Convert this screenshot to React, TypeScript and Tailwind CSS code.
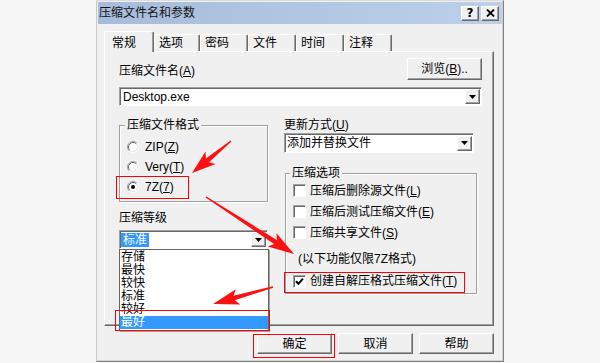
import React from "react";

const raised =
  "bg-[#f0f0f0] border border-t-white border-l-white border-r-[#696969] border-b-[#696969] shadow-[inset_-1px_-1px_0_#a0a0a0]";
const sunken =
  "bg-white border border-t-[#a0a0a0] border-l-[#a0a0a0] border-r-white border-b-white shadow-[inset_1px_1px_0_#696969]";
const etched =
  "border border-[#a0a0a0] shadow-[1px_1px_0_#fff,inset_1px_1px_0_#fff]";

function U({ children }: { children: React.ReactNode }) {
  return <span className="underline underline-offset-[1px]">{children}</span>;
}

function DropBtn() {
  return (
    <div className={`${raised} w-[15px] h-[15px] mr-[1px] flex items-center justify-center shrink-0`}>
      <svg width="7" height="4" viewBox="0 0 7 4">
        <path d="M0 0 H7 L3.5 4 Z" fill="black" />
      </svg>
    </div>
  );
}

function Radio({ checked }: { checked?: boolean }) {
  return (
    <svg width="12" height="12" viewBox="0 0 12 12" className="shrink-0">
      <circle cx="6" cy="6" r="5" fill="white" />
      <path d="M2.11 9.89 A5.5 5.5 0 0 1 9.89 2.11" fill="none" stroke="#a0a0a0" />
      <path d="M9.89 2.11 A5.5 5.5 0 0 1 2.11 9.89" fill="none" stroke="#ffffff" />
      <path d="M2.82 9.18 A4.5 4.5 0 0 1 9.18 2.82" fill="none" stroke="#696969" />
      <path d="M9.18 2.82 A4.5 4.5 0 0 1 2.82 9.18" fill="none" stroke="#e3e3e3" />
      {checked && <circle cx="6" cy="6" r="2" fill="black" />}
    </svg>
  );
}

function Check({ checked }: { checked?: boolean }) {
  return (
    <div className={`${sunken} w-[13px] h-[13px] shrink-0 flex items-center justify-center`}>
      {checked && (
        <svg width="9" height="9" viewBox="0 0 9 9">
          <path d="M1 4.2 L3.4 6.8 L8 1.6" fill="none" stroke="black" strokeWidth="2" />
        </svg>
      )}
    </div>
  );
}

function arrowPts(
  x1: number,
  y1: number,
  x2: number,
  y2: number,
  headLen = 20,
  headW = 8,
  tailW = 0.7,
  neckW = 2.4
) {
  const dx = x2 - x1,
    dy = y2 - y1;
  const L = Math.hypot(dx, dy);
  const ux = dx / L,
    uy = dy / L;
  const px = -uy,
    py = ux;
  const bx = x2 - ux * headLen,
    by = y2 - uy * headLen;
  const back = 4;
  const p = [
    [x1 + px * tailW, y1 + py * tailW],
    [bx + px * neckW, by + py * neckW],
    [bx - ux * back + px * headW, by - uy * back + py * headW],
    [x2, y2],
    [bx - ux * back - px * headW, by - uy * back - py * headW],
    [bx - px * neckW, by - py * neckW],
    [x1 - px * tailW, y1 - py * tailW],
  ];
  return p.map((q) => q.map((v) => v.toFixed(1)).join(",")).join(" ");
}

const tabs = [
  { t: "常规", w: "w-[50px]", sel: true },
  { t: "选项", w: "w-[46px]" },
  { t: "密码", w: "w-[48px]" },
  { t: "文件", w: "w-[48px]" },
  { t: "时间", w: "w-[48px]" },
  { t: "注释", w: "w-[48px]" },
];

const levels = ["存储", "最快", "较快", "标准", "较好", "最好"];

export default function App() {
  return (
    <div className="relative w-[600px] h-[363px] overflow-hidden bg-[#f7f7f7] font-['Liberation_Sans','Noto_Sans_CJK_SC',sans-serif] text-[12px] leading-[14px] text-black">
      <div className="ml-[96px] w-[408px] h-[362px] flex flex-col bg-[#f0f0f0] border border-t-[#dcdcdc] border-l-[#c8c8c8] border-r-[#808080] border-b-[#808080] pt-[1px] px-[1px] shadow-[inset_-1px_-1px_0_#d4d4d4]">
        {/* Title bar */}
        <div className="h-[22px] shrink-0 flex items-center bg-linear-to-r from-[#a6bcda] to-[#bcd0ea] pl-[1px] pr-[3px]">
          <span className="text-[12px] leading-[14px] text-[#111]">压缩文件名和参数</span>
          <div className="ml-auto flex gap-[2px]">
            <div className={`${raised} w-[18px] h-[15px] flex items-center justify-center`}>
              <span className="font-['DejaVu_Sans',sans-serif] font-bold text-[12px] leading-[12px]">?</span>
            </div>
            <div className={`${raised} w-[18px] h-[15px] flex items-center justify-center`}>
              <svg width="9" height="8" viewBox="0 0 9 8">
                <path d="M1 0.5 L8 7.5 M8 0.5 L1 7.5" stroke="black" strokeWidth="1.8" />
              </svg>
            </div>
          </div>
        </div>

        {/* Tabs */}
        <div className="mt-[7px] ml-[6px] h-[20px] flex items-end shrink-0">
          {tabs.map((tb) =>
            tb.sel ? (
              <div
                key={tb.t}
                className={`${tb.w} relative z-10 -mb-[1px] h-[21px] bg-[#f0f0f0] border-t border-l border-r border-t-white border-l-white border-r-[#696969] rounded-t-[2px] shadow-[inset_-1px_0_0_#a0a0a0] pl-[7px] pt-[4px]`}
              >
                {tb.t}
              </div>
            ) : (
              <div
                key={tb.t}
                className={`${tb.w} h-[17px] bg-[#f0f0f0] border-t border-l border-r border-t-white border-l-white border-r-[#696969] rounded-t-[2px] shadow-[inset_-1px_0_0_#a0a0a0] pl-[4px] pt-[1px]`}
              >
                {tb.t}
              </div>
            )
          )}
        </div>

        {/* Tab panel */}
        <div className="relative ml-[6px] w-[390px] h-[275px] shrink-0 border border-t-white border-l-white border-r-[#696969] border-b-[#696969] shadow-[inset_-1px_-1px_0_#a0a0a0] pt-[6px] pl-[14px] pr-[11px]">
          <div className="flex h-[22px] items-end justify-between">
            <span className="pb-[2px]">
              压缩文件名(<U>A</U>)
            </span>
            <div className={`${raised} w-[75px] h-[22px] flex items-center justify-center`}>
              <span>
                浏览(<U>B</U>)..
              </span>
            </div>
          </div>
          <div className={`${sunken} mt-[7px] h-[19px] flex items-center`}>
            <span className="pl-[3px] flex-1">Desktop.exe</span>
            <DropBtn />
          </div>

          <div className="flex">
            {/* left column */}
            <div className="w-[149px] flex flex-col">
              <div className={`${etched} relative mt-[19px] h-[77px] pt-[11px] pl-[7px]`}>
                <span className="absolute -top-[8px] left-[5px] px-[2px] bg-[#f0f0f0]">压缩文件格式</span>
                <div className="h-[20px] flex items-center gap-[6px]">
                  <Radio />
                  <span>
                    ZIP(<U>Z</U>)
                  </span>
                </div>
                <div className="h-[20px] flex items-center gap-[6px]">
                  <Radio />
                  <span>
                    Very(<U>T</U>)
                  </span>
                </div>
                <div className="h-[20px] flex items-center gap-[6px]">
                  <Radio checked />
                  <span>
                    7Z(<U>7</U>)
                  </span>
                </div>
              </div>
              <div className="mt-[9px] h-[14px]">压缩等级</div>
              <div className={`${sunken} relative mt-[5px] h-[19px] flex items-center`}>
                <span className="ml-[1px] h-[14px] px-[2px] bg-[#3399ff] text-white">标准</span>
                <span className="flex-1" />
                <DropBtn />
                <div className="absolute z-20 top-[18px] -left-[1px] w-[150px] h-[82px] bg-white border border-[#646464] shadow-[1px_1px_0_#a0a0a0] pt-[1px]">
                  {levels.map((l, i) => (
                    <div
                      key={l}
                      className={`h-[13px] leading-[13px] pl-[1px] ${i === 5 ? "bg-[#3399ff] text-white" : ""}`}
                    >
                      {l}
                    </div>
                  ))}
                </div>
              </div>
            </div>

            {/* right column */}
            <div className="ml-[16px] w-[193px] flex flex-col">
              <div className="mt-[12px] h-[14px]">
                更新方式(<U>U</U>)
              </div>
              <div className={`${sunken} mt-[1px] w-[190px] h-[20px] flex items-center`}>
                <span className="pl-[2px] flex-1">添加并替换文件</span>
                <DropBtn />
              </div>
              <div className={`${etched} relative mt-[20px] ml-[1px] w-[192px] h-[121px] pt-[6px] pl-[7px]`}>
                <span className="absolute -top-[8px] left-[4px] px-[2px] bg-[#f0f0f0]">压缩选项</span>
                <div className="h-[21px] flex items-center gap-[4px]">
                  <Check />
                  <span>
                    压缩后删除源文件(<U>L</U>)
                  </span>
                </div>
                <div className="h-[21px] flex items-center gap-[4px]">
                  <Check />
                  <span>
                    压缩后测试压缩文件(<U>E</U>)
                  </span>
                </div>
                <div className="h-[21px] flex items-center gap-[4px]">
                  <Check />
                  <span>
                    压缩共享文件(<U>S</U>)
                  </span>
                </div>
                <div className="mt-[9px] h-[14px] pl-[5px]">(以下功能仅限7Z格式)</div>
                <div className="mt-[5px] h-[20px] flex items-center gap-[4px]">
                  <Check checked />
                  <span>
                    创建自解压格式压缩文件(<U>T</U>)
                  </span>
                </div>
              </div>
            </div>
          </div>
        </div>

        {/* Buttons */}
        <div className="mt-[7px] ml-[6px] w-[390px] flex justify-end gap-[6px]">
          <div className={`${raised} w-[75px] h-[21px] flex items-center justify-center`}>确定</div>
          <div className={`${raised} w-[75px] h-[21px] flex items-center justify-center`}>取消</div>
          <div className={`${raised} w-[75px] h-[21px] flex items-center justify-center`}>帮助</div>
        </div>
      </div>

      {/* Annotation overlays */}
      <div className="absolute left-[116px] top-[176px] w-[73px] h-[23px] border border-[#ff0000]" />
      <div className="absolute z-30 left-[115px] top-[310px] w-[155px] h-[21px] border border-[#ff0000]" />
      <div className="absolute left-[284px] top-[272px] w-[181px] h-[21px] border border-[#ff0000]" />
      <div className="absolute left-[253px] top-[334px] w-[82px] h-[24px] border border-[#ff0000]" />
      <svg className="absolute z-40 left-0 top-0 pointer-events-none" width="600" height="363" viewBox="0 0 600 363">
        <polygon points={arrowPts(231, 141, 192, 173, 20, 8)} fill="#ff1010" />
        <polygon points={arrowPts(206, 197, 294, 254, 22, 8)} fill="#ff1010" />
        <polygon points={arrowPts(273, 287, 213, 304, 22, 8)} fill="#ff1010" />
      </svg>
    </div>
  );
}
